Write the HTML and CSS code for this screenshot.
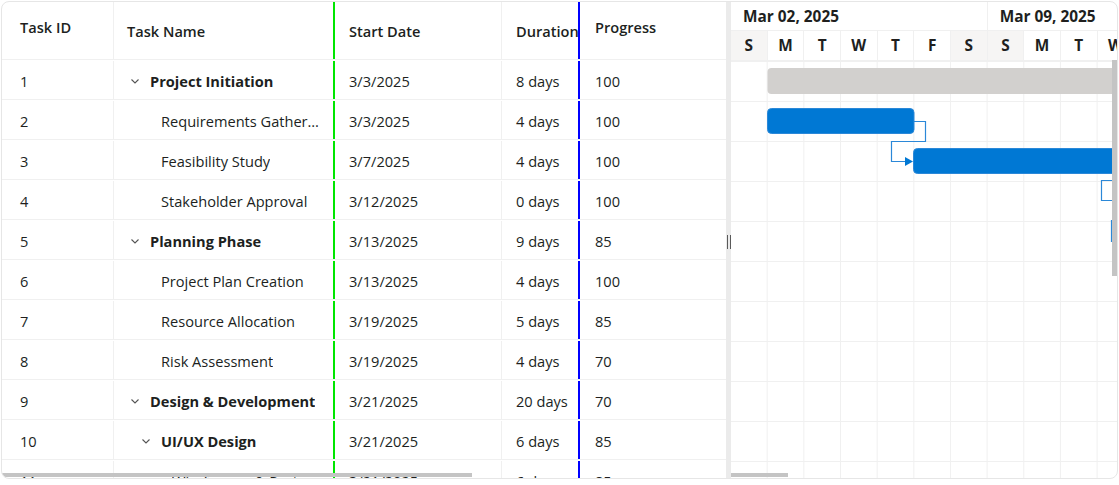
FILE: index.html
```html
<!DOCTYPE html>
<html lang="en">
  <head>
    <meta charset="UTF-8" />
    <meta name="viewport" content="width=device-width, initial-scale=1.0" />
    <title>Project Gantt</title>
    <link rel="stylesheet" href="styles.css">
  </head>
  <body>
    <div class="gantt">
      <div class="grid">
        <div class="row grid-head">
          <div class="cell col-id raised">Task ID</div>
          <div class="cell col-name">Task Name</div>
          <div class="cell col-start">Start Date</div>
          <div class="cell col-dur">Duration</div>
          <div class="cell col-prog raised">Progress</div>
        </div>
        <div class="grid-body">
          <div class="row">
            <div class="cell col-id">1</div>
            <div class="cell col-name lvl-0 parent"><span class="toggle"><svg width="8" height="5" viewBox="0 0 8 5"><path d="M0.5 0.5 4 4 7.5 0.5" /></svg></span><span class="name">Project Initiation</span></div>
            <div class="cell col-start">3/3/2025</div>
            <div class="cell col-dur">8 days</div>
            <div class="cell col-prog">100</div>
          </div>
          <div class="row">
            <div class="cell col-id">2</div>
            <div class="cell col-name lvl-1"><span class="toggle"></span><span class="name">Requirements Gathering</span></div>
            <div class="cell col-start">3/3/2025</div>
            <div class="cell col-dur">4 days</div>
            <div class="cell col-prog">100</div>
          </div>
          <div class="row">
            <div class="cell col-id">3</div>
            <div class="cell col-name lvl-1"><span class="toggle"></span><span class="name">Feasibility Study</span></div>
            <div class="cell col-start">3/7/2025</div>
            <div class="cell col-dur">4 days</div>
            <div class="cell col-prog">100</div>
          </div>
          <div class="row">
            <div class="cell col-id">4</div>
            <div class="cell col-name lvl-1"><span class="toggle"></span><span class="name">Stakeholder Approval</span></div>
            <div class="cell col-start">3/12/2025</div>
            <div class="cell col-dur">0 days</div>
            <div class="cell col-prog">100</div>
          </div>
          <div class="row">
            <div class="cell col-id">5</div>
            <div class="cell col-name lvl-0 parent"><span class="toggle"><svg width="8" height="5" viewBox="0 0 8 5"><path d="M0.5 0.5 4 4 7.5 0.5" /></svg></span><span class="name">Planning Phase</span></div>
            <div class="cell col-start">3/13/2025</div>
            <div class="cell col-dur">9 days</div>
            <div class="cell col-prog">85</div>
          </div>
          <div class="row">
            <div class="cell col-id">6</div>
            <div class="cell col-name lvl-1"><span class="toggle"></span><span class="name">Project Plan Creation</span></div>
            <div class="cell col-start">3/13/2025</div>
            <div class="cell col-dur">4 days</div>
            <div class="cell col-prog">100</div>
          </div>
          <div class="row">
            <div class="cell col-id">7</div>
            <div class="cell col-name lvl-1"><span class="toggle"></span><span class="name">Resource Allocation</span></div>
            <div class="cell col-start">3/19/2025</div>
            <div class="cell col-dur">5 days</div>
            <div class="cell col-prog">85</div>
          </div>
          <div class="row">
            <div class="cell col-id">8</div>
            <div class="cell col-name lvl-1"><span class="toggle"></span><span class="name">Risk Assessment</span></div>
            <div class="cell col-start">3/19/2025</div>
            <div class="cell col-dur">4 days</div>
            <div class="cell col-prog">70</div>
          </div>
          <div class="row">
            <div class="cell col-id">9</div>
            <div class="cell col-name lvl-0 parent"><span class="toggle"><svg width="8" height="5" viewBox="0 0 8 5"><path d="M0.5 0.5 4 4 7.5 0.5" /></svg></span><span class="name">Design &amp; Development</span></div>
            <div class="cell col-start">3/21/2025</div>
            <div class="cell col-dur">20 days</div>
            <div class="cell col-prog">70</div>
          </div>
          <div class="row">
            <div class="cell col-id">10</div>
            <div class="cell col-name lvl-1 parent"><span class="toggle"><svg width="8" height="5" viewBox="0 0 8 5"><path d="M0.5 0.5 4 4 7.5 0.5" /></svg></span><span class="name">UI/UX Design</span></div>
            <div class="cell col-start">3/21/2025</div>
            <div class="cell col-dur">6 days</div>
            <div class="cell col-prog">85</div>
          </div>
          <div class="row">
            <div class="cell col-id">11</div>
            <div class="cell col-name lvl-2"><span class="toggle"></span><span class="name">Wireframes &amp; Prototypes</span></div>
            <div class="cell col-start">3/21/2025</div>
            <div class="cell col-dur">6 days</div>
            <div class="cell col-prog">85</div>
          </div>
        </div>
        <div class="hscroll grid-thumb"></div>
      </div>

      <div class="splitter"><span class="grip"></span></div>

      <div class="chart">
        <div class="timeline">
          <div class="tier-weeks">
            <div class="week">Mar 02, 2025</div>
            <div class="week">Mar 09, 2025</div>
          </div>
          <div class="tier-days">
            <div class="day weekend">S</div>
            <div class="day">M</div>
            <div class="day">T</div>
            <div class="day">W</div>
            <div class="day">T</div>
            <div class="day">F</div>
            <div class="day weekend">S</div>
            <div class="day weekend">S</div>
            <div class="day">M</div>
            <div class="day">T</div>
            <div class="day">W</div>
          </div>
        </div>
        <div class="chart-body">
          <svg class="bars" width="388" height="420" viewBox="0 0 388 420">
            <!-- summary: Project Initiation -->
            <rect class="summary" x="36.5" y="7" width="400" height="26" rx="4" />
            <!-- Requirements Gathering -->
            <rect class="task" x="36.5" y="47.5" width="146.5" height="25" rx="4" />
            <!-- Feasibility Study -->
            <rect class="task" x="182.5" y="87.5" width="260" height="25" rx="4" />
            <!-- dependency lines -->
            <path class="link" d="M183 60.5H194.5V80.5H160.5V100.5H175" />
            <path class="arrow" d="M174 96 182 100.5 174 105Z" />
            <path class="link" d="M388 119.5H370.5V139.5H384" />
            <path class="arrow" d="M384 135.5 388 139.5 384 143.5Z" />
            <path class="link" d="M388 159.5H380.5V180.5H388" />
          </svg>
        </div>
        <div class="vscroll"></div>
        <div class="hscroll chart-thumb"></div>
      </div>
    </div>
  </body>
</html>
```

FILE: styles.css
```css
body {
  margin: 0;
  background: #fff;
  font-family: "Open Sans", "Noto Sans", sans-serif;
  font-size: 14.6px;
  color: #201f1e;
}
.gantt {
  position: relative;
  display: flex;
  width: 1117px;
  height: 478px;
  margin: 1px 0 0 1px;
  border: 1px solid #e6e6e6;
  border-radius: 8px;
  overflow: hidden;
  box-sizing: border-box;
}

/* left grid */
.grid {
  position: relative;
  width: 724px;
  flex: none;
  display: flex;
  flex-direction: column;
}
.row {
  display: flex;
  height: 40px;
  box-sizing: border-box;
  border-bottom: 1px solid #f0f0f0;
}
.grid-body .row {
  padding-top: 1px;
}
.grid-body .cell {
  padding-top: 2px;
}
.grid-head {
  height: 58px;
  font-weight: 600;
}
.grid-body {
  flex: 1;
  overflow: hidden;
}
.cell {
  display: flex;
  align-items: center;
  box-sizing: border-box;
  padding: 0 14px;
  border-right: 1px solid #f0f0f0;
  white-space: nowrap;
  overflow: hidden;
}
.grid-head .raised {
  padding-bottom: 7px;
}
.col-id {
  width: 112px;
  padding-left: 18px;
}
.col-name {
  width: 221px;
  padding-left: 13px;
  border-right: 2px solid #00e600;
}
.col-start {
  width: 167px;
}
.col-dur {
  width: 78px;
  border-right: 2px solid #0000ff;
}
.col-prog {
  width: 146px;
  padding-left: 15px;
  border-right: none;
}

/* tree column */
.grid-body .col-name {
  padding-left: 17px;
}
.grid-body .lvl-1 {
  padding-left: 28px;
}
.grid-body .lvl-2 {
  padding-left: 39px;
}
.toggle {
  flex: none;
  width: 19px;
  display: flex;
  align-items: center;
}
.toggle svg {
  fill: none;
  stroke: #555;
  stroke-width: 1.1;
}
.name {
  overflow: hidden;
  text-overflow: ellipsis;
}
.parent .name {
  font-weight: 700;
}

/* splitter */
.splitter {
  width: 5px;
  flex: none;
  background: #ebebeb;
  display: flex;
  align-items: center;
  justify-content: center;
}
.grip {
  width: 4px;
  height: 14px;
  border-left: 1px solid #5a5a5a;
  border-right: 1px solid #5a5a5a;
  box-sizing: border-box;
  margin-top: 4px;
}

/* chart side */
.chart {
  position: relative;
  flex: 1;
  overflow: hidden;
  display: flex;
  flex-direction: column;
}
.timeline {
  font-weight: 700;
  font-size: 15.4px;
  border-bottom: 1px solid #f0f0f0;
}
.tier-weeks,
.tier-days {
  display: flex;
}
.tier-weeks {
  height: 28px;
}
.week {
  flex: none;
  width: 256.67px;
  box-sizing: border-box;
  padding: 4px 0 0 12px;
  border-right: 1px solid #f0f0f0;
}
.tier-days {
  height: 29px;
  border-top: 1px solid #f0f0f0;
}
.day {
  flex: none;
  width: 36.67px;
  box-sizing: border-box;
  border-right: 1px solid #f0f0f0;
  display: flex;
  align-items: center;
  justify-content: center;
}
.weekend {
  background: #f6f5f4;
}
.chart-body {
  position: relative;
  flex: 1;
  background-image:
    linear-gradient(to right, #f0f0f0 1px, transparent 1px),
    linear-gradient(#f0f0f0 1px, transparent 1px);
  background-size: 36.67px 40px;
  background-position: 35.7px 40px;
}
.bars {
  display: block;
}
.summary {
  fill: #d2d0ce;
}
.task {
  fill: #0078d4;
  stroke: #2b88d8;
  stroke-width: 1;
}
.link {
  fill: none;
  stroke: #2b88d8;
  stroke-width: 1.2;
}
.arrow {
  fill: #0078d4;
}

/* scrollbars drawn over the content */
.hscroll,
.vscroll {
  position: absolute;
  background: #c4c4c4;
}
.hscroll {
  bottom: 1px;
  left: 0;
  height: 4px;
}
.grid-thumb {
  width: 470px;
}
.chart-thumb {
  width: 57px;
}
.vscroll {
  top: 58px;
  right: 0;
  width: 5px;
  height: 216px;
}
```
